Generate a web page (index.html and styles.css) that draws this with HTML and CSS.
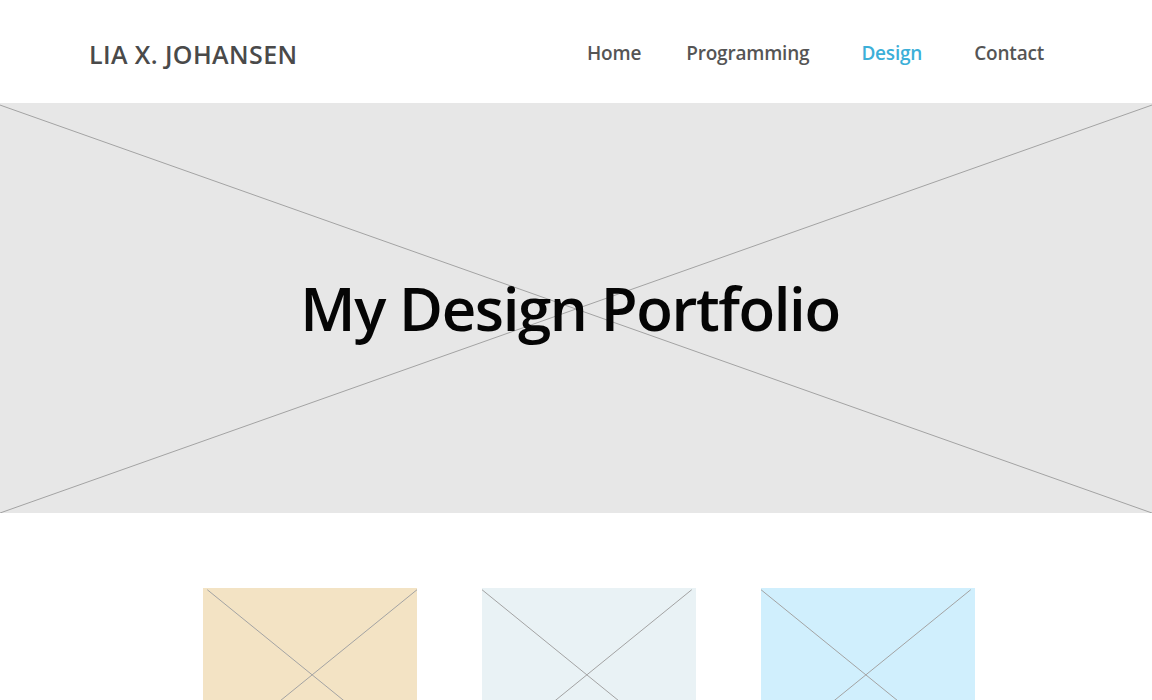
FILE: index.html
```html
<!DOCTYPE html>
<html>
<head>
<meta charset="utf-8">
<link rel="stylesheet" href="styles.css">
</head>
<body>
<header class="site-header">
  <div class="logo">LIA X. JOHANSEN</div>
  <nav class="nav">
    <a class="nav-link nav-home" href="#">Home</a>
    <a class="nav-link" href="#">Programming</a>
    <a class="nav-link active" href="#">Design</a>
    <a class="nav-link" href="#">Contact</a>
  </nav>
</header>
<section class="hero">
  <svg class="placeholder-x" viewBox="0 0 100 100" preserveAspectRatio="none">
    <line x1="0" y1="0.5" x2="100" y2="100" vector-effect="non-scaling-stroke"/>
    <line x1="100" y1="0.5" x2="0" y2="100" vector-effect="non-scaling-stroke"/>
  </svg>
  <h1 class="hero-title">My Design Portfolio</h1>
</section>
<section class="cards">
  <div class="card card-beige">
    <svg class="placeholder-x" viewBox="0 0 100 100" preserveAspectRatio="none">
      <line x1="2" y1="1" x2="100" y2="100" vector-effect="non-scaling-stroke"/>
      <line x1="100" y1="1" x2="2" y2="100" vector-effect="non-scaling-stroke"/>
    </svg>
  </div>
  <div class="card card-light">
    <svg class="placeholder-x" viewBox="0 0 100 100" preserveAspectRatio="none">
      <line x1="0" y1="1" x2="98" y2="100" vector-effect="non-scaling-stroke"/>
      <line x1="98" y1="1" x2="0" y2="100" vector-effect="non-scaling-stroke"/>
    </svg>
  </div>
  <div class="card card-blue">
    <svg class="placeholder-x" viewBox="0 0 100 100" preserveAspectRatio="none">
      <line x1="0" y1="1" x2="98" y2="100" vector-effect="non-scaling-stroke"/>
      <line x1="98" y1="1" x2="0" y2="100" vector-effect="non-scaling-stroke"/>
    </svg>
  </div>
</section>
</body>
</html>
```

FILE: styles.css
```css
* { box-sizing: border-box; }
html, body { margin: 0; padding: 0; }
body {
  font-family: "Open Sans", "Noto Sans", sans-serif;
  background: #fff;
  overflow: hidden;
}
.site-header {
  height: 103px;
  display: flex;
  align-items: center;
  justify-content: space-between;
  padding: 4px 108px 0 89px;
}
.logo {
  font-size: 25px;
  font-weight: 600;
  color: #4a4a4a;
  letter-spacing: 0.4px;
}
.nav {
  display: flex;
  align-items: center;
  gap: 52px;
  padding-bottom: 1px;
}
.nav-link {
  font-size: 19px;
  font-weight: 600;
  color: #555;
  text-decoration: none;
  letter-spacing: -0.2px;
}
.nav-home { margin-right: -7px; }
.nav-link.active { color: #3cafd8; }
.hero {
  position: relative;
  height: 410px;
  background: #e7e7e7;
  display: flex;
  align-items: center;
  justify-content: center;
}
.placeholder-x {
  position: absolute;
  inset: 0;
  width: 100%;
  height: 100%;
}
.placeholder-x line {
  stroke: #a3a3a3;
  stroke-width: 1;
}
.hero-title {
  position: relative;
  margin: 0 12px 0 0;
  font-size: 60px;
  font-weight: 600;
  color: #050505;
  letter-spacing: -1.4px;
}
.cards {
  display: flex;
  justify-content: center;
  gap: 65px;
  padding: 75px 0 0 25px;
}
.card {
  position: relative;
  width: 214px;
  height: 172px;
  flex: none;
}
.card-beige { background: #f3e3c4; }
.card-light { background: #e9f2f5; }
.card-blue { background: #d0effd; }
```
